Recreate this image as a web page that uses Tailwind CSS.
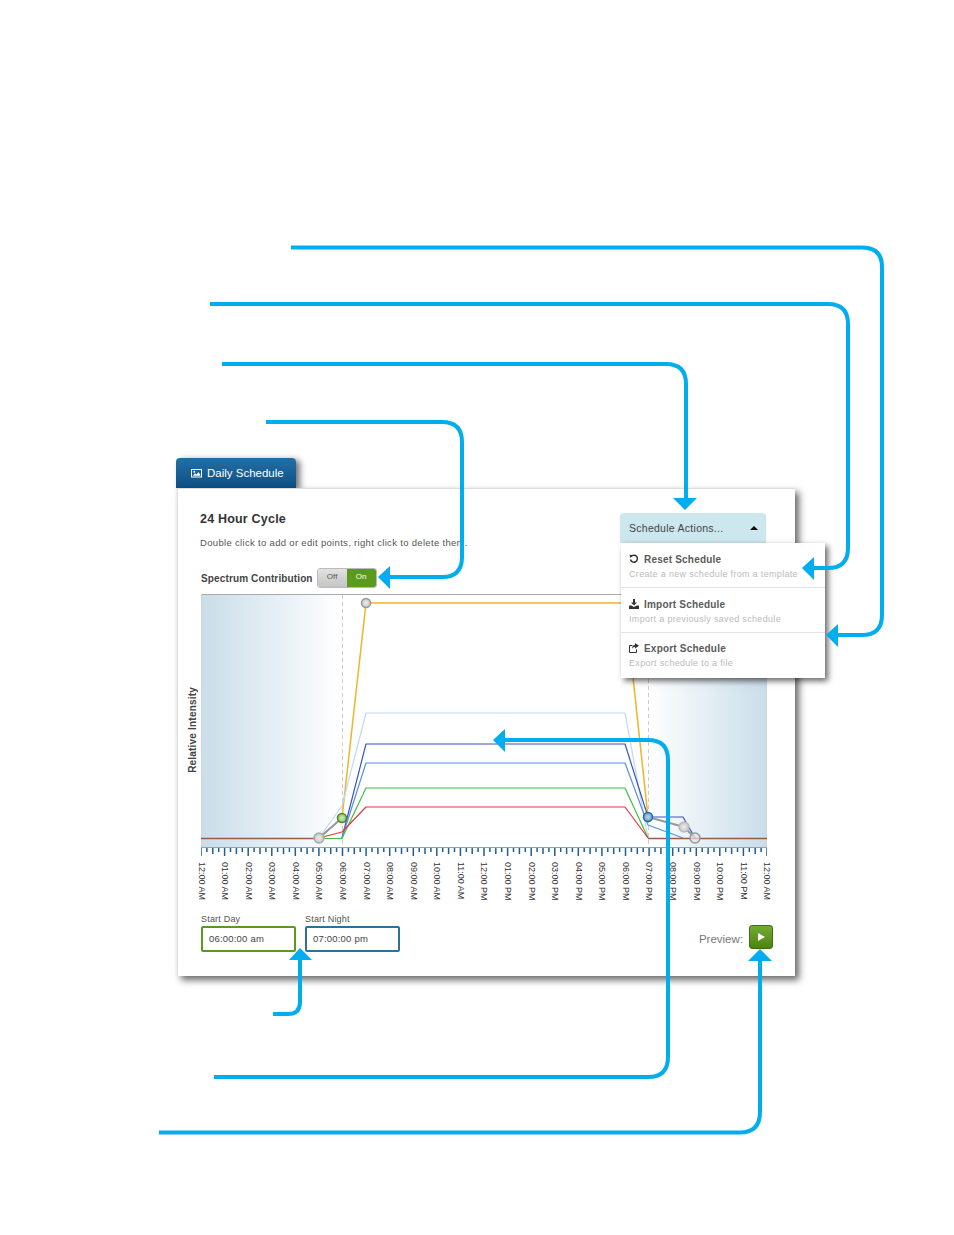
<!DOCTYPE html>
<html lang="en">
<head>
  <meta charset="UTF-8" />
  <title>Daily Schedule</title>
  <script src="https://cdn.jsdelivr.net/npm/@tailwindcss/browser@4"></script>
</head>
<body class="bg-white font-['Liberation_Sans',Arial,sans-serif] text-[#444]">
  <div class="relative w-[954px] h-[1235px] overflow-hidden pt-[458px] pl-[176px]">

    <!-- tab -->
    <div class="w-[120px] h-[30px] rounded-t-[4px] bg-gradient-to-b from-[#226fa6] to-[#0e5083] shadow-[4px_2px_6px_rgba(0,0,0,0.55)] flex items-center pl-[15px] gap-[5px] text-white text-[11.500px]">
      <svg width="11" height="10" viewBox="0 0 11 10"><path fill="#fff" fill-rule="evenodd" d="M0 1h11v8.500H0zM1 2v6.500h9V2zM1.800 7.800l2.200-2.600 1.400 1.400 2-2.400 1.800 2v1.600zM3.300 2.700a1 1 0 1 1-.01 2 1 1 0 0 1 .01-2z"/></svg>
      <span class="pt-[2px]">Daily Schedule</span>
    </div>

    <!-- card -->
    <div class="relative ml-px w-[618px] h-[488px] bg-white border-t border-l border-[#ddd] shadow-[4px_4px_7px_rgba(0,0,0,0.6)]">
      <div class="flex justify-between items-start pr-[29px] pl-[22px] pt-[21px] h-[105px]">
        <div>
          <h2 class="text-[12.500px] leading-[18px] font-bold text-[#333] tracking-[0.2px]">24 Hour Cycle</h2>
          <p class="mt-[8px] text-[9.500px] leading-[14px] text-[#555] tracking-[0.32px] whitespace-nowrap">Double click to add or edit points, right click to delete them.</p>
          <div class="mt-[18px] flex items-center gap-[4px] pl-px">
            <span class="text-[10px] font-bold text-[#444] tracking-[0.13px]">Spectrum Contribution</span>
            <div class="flex w-[60px] h-[20px] rounded-[3px] overflow-hidden border border-[#bbb] text-[8px] leading-[16px] text-center">
              <span class="w-[30px] bg-gradient-to-b from-[#e2e2e2] to-[#c4c4c4] text-[#555]">Off</span>
              <span class="w-[30px] bg-[#5a9a1c] text-white">On</span>
            </div>
          </div>
        </div>

        <!-- dropdown -->
        <div class="relative mt-[3px] shrink-0">
          <button class="w-[146px] h-[30px] rounded-[4px] bg-[#cde7ef] shadow-[0_1px_1px_rgba(0,0,0,0.2)] flex items-center justify-between pl-[9px] pr-[8px] text-[10.500px] text-[#444] tracking-[0.27px]">
            <span class="pt-[2px]">Schedule Actions...</span>
            <span class="w-0 h-0 border-x-[4px] border-x-transparent border-b-[4px] border-b-black"></span>
          </button>
          <ul class="absolute z-10 top-[30px] left-px w-[204px] h-[135px] bg-white shadow-[3px_3px_6px_rgba(0,0,0,0.6)] divide-y divide-[#e4e4e4]">
            <li class="h-[45px] pl-[8px] pt-[9px]">
              <div class="flex items-center gap-[5px] h-[14px] text-[10px] font-bold text-[#5a5a5a] tracking-[0.2px]">
                <svg width="10" height="10" viewBox="0 0 10 10"><path fill="none" stroke="#333" stroke-width="1.500" d="M2 2.700A3.500 3.500 0 1 1 1.500 5.500"/><path fill="#333" d="M.6 .8 4 1.200 1.200 4z"/></svg>
                <span>Reset Schedule</span>
              </div>
              <p class="mt-[2px] text-[9px] leading-[13px] text-[#bbb] tracking-[0.32px] whitespace-nowrap">Create a new schedule from a template</p>
            </li>
            <li class="h-[45px] pl-[8px] pt-[9px]">
              <div class="flex items-center gap-[5px] h-[14px] text-[10px] font-bold text-[#5a5a5a] tracking-[0.2px]">
                <svg width="10" height="10" viewBox="0 0 10 10"><path fill="#333" d="M4 0h2v3.500h2L5 6.500 2 3.500h2zM0 6.500h2.200L5 8l2.800-1.500H10V10H0z"/></svg>
                <span>Import Schedule</span>
              </div>
              <p class="mt-[2px] text-[9px] leading-[13px] text-[#bbb] tracking-[0.32px] whitespace-nowrap">Import a previously saved schedule</p>
            </li>
            <li class="h-[45px] pl-[8px] pt-[8px]">
              <div class="flex items-center gap-[5px] h-[14px] text-[10px] font-bold text-[#5a5a5a] tracking-[0.2px]">
                <svg width="10" height="10" viewBox="0 0 10 10"><path fill="none" stroke="#333" d="M7.500 6.500v3h-7V2.500h3"/><path fill="#333" d="M6 0l4 2.800L6 5.500V4C4.500 4 3.500 4.500 3 6c0-2.500 1-3.800 3-4z"/></svg>
                <span>Export Schedule</span>
              </div>
              <p class="mt-[2px] text-[9px] leading-[13px] text-[#bbb] tracking-[0.32px] whitespace-nowrap">Export schedule to a file</p>
            </li>
          </ul>
        </div>
      </div>

      <!-- chart -->
      <div class="relative ml-[23px] w-[566px] h-[262px]">
        <span class="absolute left-[-16px] top-[93px] text-[10px] font-bold text-[#444] tracking-[0.2px] [writing-mode:vertical-rl] rotate-180 whitespace-nowrap">Relative Intensity</span>
        <svg width="566" height="262" viewBox="201 594 566 262" class="block">
          <defs>
            <linearGradient id="dayL" x1="0" x2="1" y1="0" y2="0"><stop offset="0" stop-color="#c9dde9"/><stop offset="1" stop-color="#fff"/></linearGradient>
            <linearGradient id="dayR" x1="0" x2="1" y1="0" y2="0"><stop offset="0" stop-color="#fff"/><stop offset="1" stop-color="#c9dde9"/></linearGradient>
            <radialGradient id="hGray"><stop offset="0" stop-color="#eee"/><stop offset="1" stop-color="#c4c4c4"/></radialGradient>
            <radialGradient id="hGreen"><stop offset="0" stop-color="#d4ecc0"/><stop offset="1" stop-color="#8fc070"/></radialGradient>
            <radialGradient id="hBlue"><stop offset="0" stop-color="#bcd6ec"/><stop offset="1" stop-color="#6fa0c8"/></radialGradient>
          </defs>
          <rect x="201" y="594" width="141" height="253" fill="url(#dayL)"/>
          <rect x="648" y="594" width="119" height="253" fill="url(#dayR)"/>
          <path d="M201 594.500H767" stroke="#aaa" fill="none"/>
          <path d="M201.500 594V847M766.500 594V847" stroke="#d4d4d4" fill="none"/>
          <path d="M342.500 595V847M648.500 595V847" stroke="#ccc" stroke-dasharray="4 3" fill="none"/>
          <g fill="none" stroke-linejoin="round">
            <path d="M201 838.500H319M648 838.500H767" stroke="#9c5a48" stroke-width="1.500"/>
            <path d="M319 838 342 818 366 603H625L648 817" stroke="#f0b429" stroke-width="1.500"/>
            <path d="M319 838 342 806 366 713H625L648 838" stroke="#bcd9f5" stroke-width="1.200"/>
            <path d="M342 838 366 744H625L648 817H683L695 838" stroke="#3c52c4" stroke-width="1.200"/>
            <path d="M342 838 366 763H625L648 825 683 838" stroke="#5b8fe0" stroke-width="1.200"/>
            <path d="M319 838.500H342L366 788H625L648 838" stroke="#42bd48" stroke-width="1.200"/>
            <path d="M319 838 342 832 366 807H625L648 838" stroke="#e03a3a" stroke-width="1.200"/>
            <path d="M319 838 342 818M648 817 684 827 695 838" stroke="#999" stroke-width="2"/>
          </g>
          <g stroke-width="1.500">
            <circle cx="366" cy="603" r="4.500" fill="url(#hGray)" stroke="#999"/>
            <circle cx="319" cy="838" r="5" fill="url(#hGray)" stroke="#aaa"/>
            <circle cx="684" cy="827" r="5" fill="url(#hGray)" stroke="#bbb"/>
            <circle cx="695" cy="838" r="5" fill="#e4e4e4" fill-opacity=".7" stroke="#999"/>
            <circle cx="342" cy="818" r="4.500" fill="url(#hGreen)" stroke="#4f8a1a"/>
            <circle cx="648" cy="817" r="4.500" fill="url(#hBlue)" stroke="#1f6aa5"/>
          </g>
          <path d="M201 847.500H767" stroke="#8fa3b0" fill="none"/>
          <path id="ticks" stroke="#1f5f94" stroke-width="1.500" fill="none"/>
        </svg>
      </div>

      <!-- time axis -->
      <div class="ml-[23px] mt-[6px] w-[566px] h-[40px] flex justify-between text-[9px] leading-none text-[#333]">
        <span class="w-0 flex justify-center"><span class="[writing-mode:vertical-rl] whitespace-nowrap">12:00 AM</span></span>
        <span class="w-0 flex justify-center"><span class="[writing-mode:vertical-rl] whitespace-nowrap">01:00 AM</span></span>
        <span class="w-0 flex justify-center"><span class="[writing-mode:vertical-rl] whitespace-nowrap">02:00 AM</span></span>
        <span class="w-0 flex justify-center"><span class="[writing-mode:vertical-rl] whitespace-nowrap">03:00 AM</span></span>
        <span class="w-0 flex justify-center"><span class="[writing-mode:vertical-rl] whitespace-nowrap">04:00 AM</span></span>
        <span class="w-0 flex justify-center"><span class="[writing-mode:vertical-rl] whitespace-nowrap">05:00 AM</span></span>
        <span class="w-0 flex justify-center"><span class="[writing-mode:vertical-rl] whitespace-nowrap">06:00 AM</span></span>
        <span class="w-0 flex justify-center"><span class="[writing-mode:vertical-rl] whitespace-nowrap">07:00 AM</span></span>
        <span class="w-0 flex justify-center"><span class="[writing-mode:vertical-rl] whitespace-nowrap">08:00 AM</span></span>
        <span class="w-0 flex justify-center"><span class="[writing-mode:vertical-rl] whitespace-nowrap">09:00 AM</span></span>
        <span class="w-0 flex justify-center"><span class="[writing-mode:vertical-rl] whitespace-nowrap">10:00 AM</span></span>
        <span class="w-0 flex justify-center"><span class="[writing-mode:vertical-rl] whitespace-nowrap">11:00 AM</span></span>
        <span class="w-0 flex justify-center"><span class="[writing-mode:vertical-rl] whitespace-nowrap">12:00 PM</span></span>
        <span class="w-0 flex justify-center"><span class="[writing-mode:vertical-rl] whitespace-nowrap">01:00 PM</span></span>
        <span class="w-0 flex justify-center"><span class="[writing-mode:vertical-rl] whitespace-nowrap">02:00 PM</span></span>
        <span class="w-0 flex justify-center"><span class="[writing-mode:vertical-rl] whitespace-nowrap">03:00 PM</span></span>
        <span class="w-0 flex justify-center"><span class="[writing-mode:vertical-rl] whitespace-nowrap">04:00 PM</span></span>
        <span class="w-0 flex justify-center"><span class="[writing-mode:vertical-rl] whitespace-nowrap">05:00 PM</span></span>
        <span class="w-0 flex justify-center"><span class="[writing-mode:vertical-rl] whitespace-nowrap">06:00 PM</span></span>
        <span class="w-0 flex justify-center"><span class="[writing-mode:vertical-rl] whitespace-nowrap">07:00 PM</span></span>
        <span class="w-0 flex justify-center"><span class="[writing-mode:vertical-rl] whitespace-nowrap">08:00 PM</span></span>
        <span class="w-0 flex justify-center"><span class="[writing-mode:vertical-rl] whitespace-nowrap">09:00 PM</span></span>
        <span class="w-0 flex justify-center"><span class="[writing-mode:vertical-rl] whitespace-nowrap">10:00 PM</span></span>
        <span class="w-0 flex justify-center"><span class="[writing-mode:vertical-rl] whitespace-nowrap">11:00 PM</span></span>
        <span class="w-0 flex justify-center"><span class="[writing-mode:vertical-rl] whitespace-nowrap">12:00 AM</span></span>
      </div>

      <!-- start day / night + preview -->
      <div class="mt-[11px] ml-[23px] w-[572px] flex items-end">
        <label class="block w-[95px] text-[9px] leading-[12px] text-[#555] tracking-[0.2px]">Start Day
          <span class="mt-px block h-[26px] border-2 border-[#5a9a1c] rounded-[2px] pl-[6px] text-[9.500px] leading-[22px] text-[#444]">06:00:00 am</span>
        </label>
        <label class="block ml-[9px] w-[95px] text-[9px] leading-[12px] text-[#555] tracking-[0.2px]">Start Night
          <span class="mt-px block h-[26px] border-2 border-[#2f7099] rounded-[2px] pl-[6px] text-[9.500px] leading-[22px] text-[#444]">07:00:00 pm</span>
        </label>
        <div class="ml-auto flex items-center gap-[6px] mb-[3px]">
          <span class="mt-[6px] text-[11.500px] text-[#777]">Preview:</span>
          <button class="w-[24px] h-[24px] rounded-[3px] border border-[#3f6d12] bg-gradient-to-b from-[#74ab33] to-[#4b840f] flex items-center justify-center">
            <svg width="7" height="8" viewBox="0 0 7 8"><path fill="#fff" d="M0 0l7 4-7 4z"/></svg>
          </button>
        </div>
      </div>
    </div>

    <!-- callout arrows -->
    <svg class="absolute inset-0 z-20 pointer-events-none" width="954" height="1235" viewBox="0 0 954 1235">
      <g fill="none" stroke="#00aeef" stroke-width="4">
        <path d="M291 247.500H862Q882 247.500 882 267V615Q882 635 862 635H836"/>
        <path d="M210 304H828Q848 304 848 324V548Q848 568 828 568H812"/>
        <path d="M222 364H666Q686 364 686 384V500"/>
        <path d="M266 422H442Q462 422 462 442V557Q462 577 442 577H388"/>
        <path d="M273 1014H288Q300 1014 300 1002V958"/>
        <path d="M214 1077H648Q668 1077 668 1057V760Q668 740 648 740H503"/>
        <path d="M159 1132.500H740Q760 1132.500 760 1112V959"/>
      </g>
      <g fill="#00aeef">
        <path d="M826 635 838 624V647z"/>
        <path d="M802 568 814 557V580z"/>
        <path d="M685 510 673 498H697z"/>
        <path d="M378 577 390 566V589z"/>
        <path d="M300 948 289 960H312z"/>
        <path d="M493 740 505 729V752z"/>
        <path d="M760 949 748 961H772z"/>
      </g>
    </svg>
  </div>
  <script>
    // 15 minute ticks under the chart
    let d = "";
    for (let i = 0; i <= 96; i++) {
      const x = (201 + i * 5.896).toFixed(1);
      const len = i % 4 === 0 ? 9 : i % 2 === 0 ? 6 : 4;
      d += "M" + x + " 848v" + len;
    }
    document.getElementById("ticks").setAttribute("d", d);
  </script>
</body>
</html>
